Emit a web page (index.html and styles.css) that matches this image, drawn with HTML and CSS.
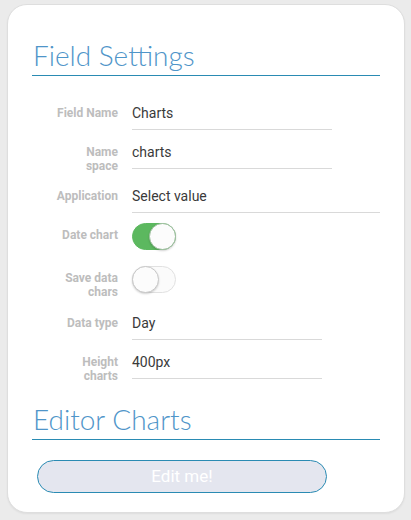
FILE: index.html
```html
<!DOCTYPE html>
<html lang="en">
<head>
<meta charset="utf-8">
<title>Field Settings</title>
<link rel="stylesheet" href="styles.css">
</head>
<body>
<div class="card">
  <h2 class="section-title">Field Settings</h2>
  <div class="form">
    <div class="row">
      <div class="label">Field Name</div>
      <div class="field w200">Charts</div>
    </div>
    <div class="row">
      <div class="label">Name<br>space</div>
      <div class="field w200">charts</div>
    </div>
    <div class="row row-spaced">
      <div class="label">Application</div>
      <div class="field grow">Select value</div>
    </div>
    <div class="row row-toggle">
      <div class="label">Date chart</div>
      <div class="switch on"><span class="knob"></span></div>
    </div>
    <div class="row row-toggle row-tight">
      <div class="label">Save data<br>chars</div>
      <div class="switch"><span class="knob"></span></div>
    </div>
    <div class="row">
      <div class="label">Data type</div>
      <div class="field w190">Day</div>
    </div>
    <div class="row">
      <div class="label">Height<br>charts</div>
      <div class="field w190">400px</div>
    </div>
  </div>
  <h2 class="section-title second">Editor Charts</h2>
  <button class="edit-btn" type="button">Edit me!</button>
</div>
</body>
</html>
```

FILE: styles.css
```css
* { box-sizing: border-box; }

html, body {
  margin: 0;
  padding: 0;
}

body {
  background: #ebebeb;
  font-family: Roboto, "Liberation Sans", Arial, sans-serif;
}

.card {
  margin: 4px 6px 7px 7px;
  height: 509px;
  background: #ffffff;
  border: 1px solid #dedede;
  border-radius: 20px;
  padding: 35px 24px 0 24px;
  box-shadow: 0 1px 2px rgba(0, 0, 0, 0.06);
}

.section-title {
  margin: 0;
  font-family: Lato, Roboto, "Liberation Sans", Arial, sans-serif;
  font-size: 28px;
  font-weight: 300;
  line-height: 30px;
  color: #4f95c9;
  padding: 0 0 5px 1px;
  border-bottom: 1px solid #2a8bb3;
}

.section-title.second {
  margin-top: 21px;
}

.form {
  padding-top: 15px;
}

.row {
  display: flex;
  align-items: flex-start;
  gap: 14px;
  margin-top: 12px;
}

.row-spaced {
  margin-top: 13px;
}

.row-toggle {
  margin-top: 10px;
}

.row-toggle.row-tight {
  margin-top: 8px;
}

.label {
  width: 86px;
  flex: none;
  text-align: right;
  font-size: 12px;
  font-weight: 700;
  line-height: 14px;
  color: #bdbdbd;
  padding-top: 3px;
}

.row-toggle .label {
  padding-top: 5px;
}

.field {
  font-size: 14px;
  line-height: 20px;
  color: #3a3a3a;
  padding-bottom: 6px;
  border-bottom: 1px solid #d9d9d9;
}

.field.w200 { width: 200px; }
.field.w190 { width: 190px; }
.field.grow { flex: 1; }

.switch {
  position: relative;
  flex: none;
  width: 44px;
  height: 27px;
  border-radius: 14px;
  background: #fbfbfb;
  border: 1px solid #e1e1e1;
  margin-bottom: 8px;
}

.switch.on {
  background: #5cb85f;
  border-color: #5cb85f;
}

.knob {
  position: absolute;
  top: -1px;
  left: -1px;
  width: 27px;
  height: 27px;
  border-radius: 50%;
  background: #fcfcfc;
  border: 1px solid #c8c8c8;
  box-shadow: 0 1px 2px rgba(0, 0, 0, 0.18);
}

.switch.on .knob {
  left: auto;
  right: -1px;
  border-color: #9fbfa0;
}

.edit-btn {
  display: block;
  margin: 20px 0 0 5px;
  width: 290px;
  height: 33px;
  border-radius: 17px;
  border: 1px solid #2a8bb3;
  background: #e4e6ef;
  color: #ffffff;
  font-family: Roboto, "Liberation Sans", Arial, sans-serif;
  font-size: 17px;
  line-height: 31px;
  padding: 0;
  text-align: center;
}
```
